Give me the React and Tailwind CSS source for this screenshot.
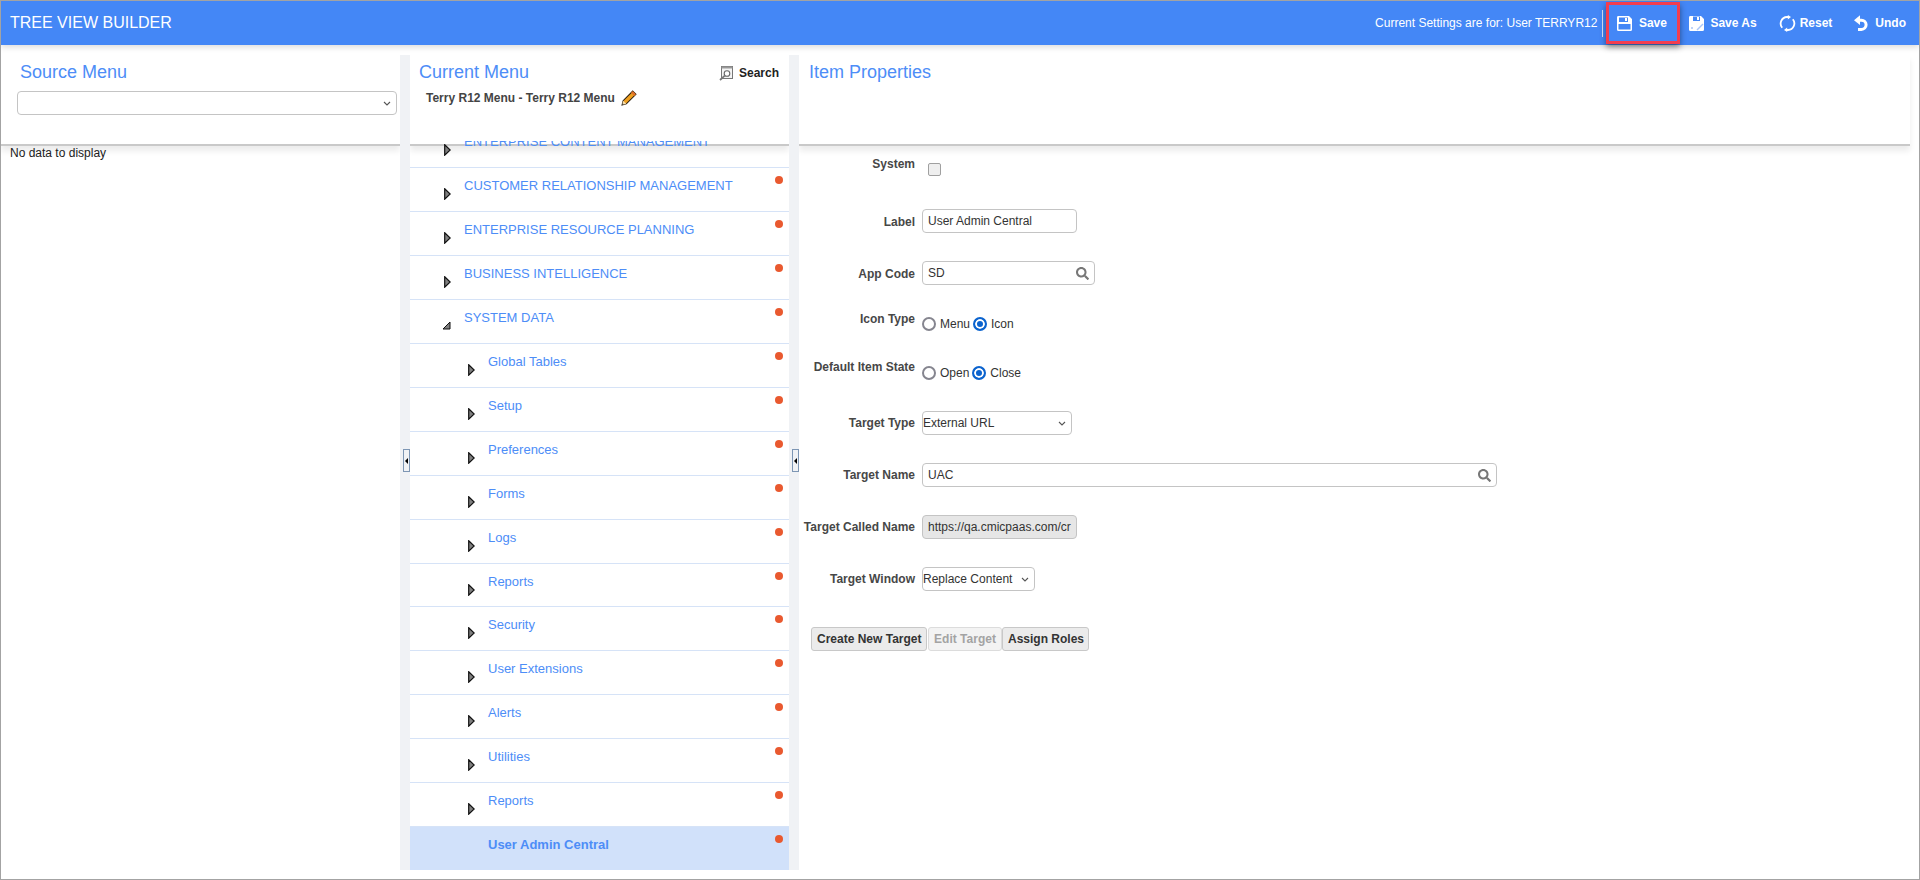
import React from "react";
import { FaSearch } from "react-icons/fa";

const SaveIcon = () => (
  <svg width="17" height="17" viewBox="0 0 17 17" fill="none">
    <path d="M2 1h11l3 3v10.5a1.5 1.5 0 0 1-1.5 1.5h-12A1.5 1.5 0 0 1 1 14.5v-12A1.5 1.5 0 0 1 2 1z" fill="#fff" />
    <rect x="3" y="2.5" width="9" height="4.5" fill="#4487f6" />
    <rect x="9" y="3" width="2" height="3" fill="#fff" />
    <rect x="2.5" y="9" width="12" height="5.5" fill="#4487f6" />
  </svg>
);
const SaveAsIcon = () => (
  <svg width="17" height="17" viewBox="0 0 17 17" fill="none">
    <path d="M2 1h11l3 3v10.5a1.5 1.5 0 0 1-1.5 1.5h-12A1.5 1.5 0 0 1 1 14.5v-12A1.5 1.5 0 0 1 2 1z" fill="#fff" />
    <rect x="5" y="1.5" width="7" height="4.5" fill="#4487f6" />
    <rect x="9" y="2" width="2" height="3" fill="#fff" />
    <path d="M9 15l6-6" stroke="#a9c6f8" strokeWidth="1.4" />
    <circle cx="4" cy="13" r="1" fill="#a9c6f8" />
  </svg>
);
const ResetIcon = () => (
  <svg width="17" height="17" viewBox="0 0 17 17" fill="none">
    <path d="M3.2 12.8A6.6 6.6 0 0 1 8 2h1.5" stroke="#fff" strokeWidth="1.8" />
    <path d="M8.8 0l3.2 2-3.2 2.4z" fill="#fff" />
    <path d="M13.8 4.2A6.6 6.6 0 0 1 9 15H7.5" stroke="#fff" strokeWidth="1.8" />
    <path d="M8.2 17L5 15l3.2-2.4z" fill="#fff" />
  </svg>
);
const UndoIcon = () => (
  <svg width="15" height="16" viewBox="0 0 15 16" fill="none">
    <path d="M3.5 5.2H7.5a4.6 4.6 0 0 1 0 9.2H4" stroke="#fff" strokeWidth="3" />
    <path d="M6 0.3v9.6L0 5.2z" fill="#fff" />
  </svg>
);
const FindIcon = () => (
  <svg width="14" height="15" viewBox="0 0 14 15" fill="none">
    <rect x="2.5" y="0.5" width="11" height="12" fill="#f4f4f4" stroke="#777" />
    <rect x="2.5" y="0.5" width="11" height="2" fill="#999" />
    <circle cx="8" cy="7.5" r="2.8" fill="#fff" stroke="#666" strokeWidth="1.1" />
    <path d="M5.8 9.6L1 14" stroke="#777" strokeWidth="1.7" />
  </svg>
);
const PencilIcon = () => (
  <svg width="16" height="16" viewBox="0 0 15 15" fill="none">
    <path d="M11 1l3 3-9 9-4 1 1-4z" fill="#f0a020" stroke="#2a1c08" strokeWidth="1" />
    <path d="M11 1l3 3-1.6 1.6-3-3z" fill="#e0702a" />
    <path d="M1 14l1-4 3 3z" fill="#f6dfb0" />
    <path d="M1 14l.4-1.6 1.2 1.2z" fill="#222" />
  </svg>
);
const Arrow = ({ open }) =>
  open ? (
    <svg width="9" height="9" viewBox="0 0 9 9">
      <path d="M1 8L8 1v7z" fill="#808080" stroke="#111" strokeWidth="1" />
    </svg>
  ) : (
    <svg width="7" height="12" viewBox="0 0 7 12">
      <path d="M0.7 0.8L6.2 6 0.7 11.2z" fill="#808080" stroke="#111" strokeWidth="1.2" />
    </svg>
  );

const Chevron = () => (
  <svg width="8" height="5" viewBox="0 0 8 5" fill="none" className="absolute right-[6px] top-[10px] pointer-events-none">
    <path d="M1 1l3 3 3-3" stroke="#555" strokeWidth="1.1" />
  </svg>
);

const Select = ({ className, value }) => (
  <div className={`relative h-[24px] ${className}`}>
    <select className="appearance-none block w-full h-full rounded border border-[#c4c4c4] bg-white pl-0 text-[12px] text-[#333]">
      {value && <option>{value}</option>}
    </select>
    <Chevron />
  </div>
);

const Row = ({ label, level, open, noArrow, selected, clear, h = "h-[44px]" }) => (
  <div className={`relative shrink-0 ${h} border-b border-[#d6e3f7] ${selected ? "bg-[#d1e1fa]" : clear ? "bg-transparent" : "bg-white"}`}>
    <span className={`absolute top-[10px] text-[13px] leading-[16px] whitespace-nowrap text-[#4d8df7] ${level === 1 ? "left-[54px]" : "left-[78px]"} ${selected ? "font-bold" : ""}`}>
      {label}
    </span>
    {!noArrow && (
      <span className={`absolute ${open ? "top-[21px] left-[32px]" : level === 1 ? "top-[20px] left-[34px]" : "top-[20px] left-[58px]"} flex`}>
        <Arrow open={open} />
      </span>
    )}
    <span className="absolute top-[8px] left-[365px] w-[8px] h-[8px] rounded-full bg-[#e9592f]" />
  </div>
);

const Handle = () => (
  <div className="absolute top-[394px] w-[7px] h-[23px] border border-[#7d96b4] bg-[#f0f2f5] flex items-center justify-center right-0">
    <span className="w-0 h-0 border-y-[3px] border-y-transparent border-r-[3px] border-r-black" />
  </div>
);

const PanelHead = ({ children, className = "" }) => (
  <div className={`relative z-10 shrink-0 h-[91px] bg-white border-b-2 border-[#c9c9c9] shadow-[0_5px_6px_rgba(0,0,0,0.08)] ${className}`}>
    {children}
  </div>
);

const FormRow = ({ label, h, lt = "mt-[5px]", children }) => (
  <div className={`flex items-start shrink-0 ${h}`}>
    <div className={`w-[116px] text-right font-bold text-[12px] leading-[16px] text-[#474747] whitespace-nowrap flex justify-end ${lt}`}>{label}</div>
    <div className="ml-[7px]">{children}</div>
  </div>
);

const inputCls = "h-[24px] rounded border border-[#c4c4c4] bg-white px-[5px] text-[12px] text-[#333] outline-none";

const Radio = ({ text, checked }) => (
  <label className="flex items-center text-[12px] leading-[14px] text-[#333]">
    <input
      type="radio"
      readOnly
      checked={!!checked}
      className="appearance-none w-[14px] h-[14px] m-0 rounded-full border-2 border-[#85858f] bg-white checked:border-[#0b63ce] checked:bg-[#0b63ce] checked:shadow-[inset_0_0_0_2px_#fff]"
    />
    <span className="ml-[4px] mr-[3px]">{text}</span>
  </label>
);

const btn = "h-[24px] rounded-[3px] border border-[#c8c8c8] bg-[#ebebeb] px-[5px] text-[12px] font-bold text-[#333] whitespace-nowrap";

const HBtn = ({ icon, text, className = "", gap = "ml-[6px]" }) => (
  <div className={`flex items-center font-bold text-[12px] text-white ${className}`}>
    {icon}
    <span className={gap}>{text}</span>
  </div>
);

const title = "text-[18px] leading-[26px] text-[#4d8df7]";

export default function App() {
  return (
    <div className="w-[1920px] h-[880px] border border-[#a3a3a3] bg-white flex flex-col overflow-hidden font-['Liberation_Sans',Arial,sans-serif]">
      <header className="relative z-30 shrink-0 h-[44px] bg-[#4487f6] flex items-center pl-[9px] shadow-[0_2px_6px_rgba(0,0,0,0.15)]">
        <h1 className="text-[16px] text-white font-normal">TREE VIEW BUILDER</h1>
        <div className="ml-auto flex items-center h-full">
          <span className="text-[12px] text-white whitespace-nowrap">Current Settings are for: User TERRYR12</span>
          <span className="w-px h-[27px] bg-[#d5e3fb] ml-[5px]" />
          <div className="ml-[3px] w-[74px] h-[42px] border-[3px] border-[#f23d4f] flex items-center justify-center pr-[4px] shadow-[0_3px_6px_rgba(0,0,0,0.45)]">
            <HBtn icon={<SaveIcon />} text="Save" />
          </div>
          <HBtn icon={<SaveAsIcon />} text="Save As" gap="ml-[5px]" className="ml-[8px]" />
          <HBtn icon={<ResetIcon />} text="Reset" gap="ml-[4px]" className="ml-[22px]" />
          <HBtn icon={<UndoIcon />} text="Undo" className="ml-[22px] mr-[13px]" />
        </div>
      </header>

      <main className="flex flex-1 min-h-0 pt-[10px] pb-[9px]">
        <section className="w-[399px] shrink-0 flex flex-col">
          <PanelHead>
            <h2 className={`absolute left-[19px] top-[4px] ${title}`}>Source Menu</h2>
            <Select className="absolute left-[16px] top-[36px] w-[380px]" />
          </PanelHead>
          <p className="pl-[9px] text-[12px] leading-[14px] text-[#222]">No data to display</p>
        </section>

        <div className="relative z-20 w-[10px] shrink-0 bg-[#f0f2f5]"><Handle /></div>

        <section className="w-[379px] shrink-0 flex flex-col">
          <PanelHead>
            <h2 className={`absolute left-[9px] top-[4px] ${title}`}>Current Menu</h2>
            <div className="absolute right-[10px] top-[9px] flex items-center font-bold text-[12px] text-[#222]">
              <FindIcon />
              <span className="ml-[6px]">Search</span>
            </div>
            <div className="absolute left-[16px] top-[34px] flex items-center font-bold text-[12px] text-[#444]">
              <span>Terry R12 Menu - Terry R12 Menu</span>
              <span className="ml-[6px] flex"><PencilIcon /></span>
            </div>
          </PanelHead>
          <div className="relative z-10 flex-1 min-h-0 -mt-[5px] overflow-hidden">
            <div className="flex flex-col -mt-[17px]">
              <Row label="ENTERPRISE CONTENT MANAGEMENT" level={1} clear />
              <Row label="CUSTOMER RELATIONSHIP MANAGEMENT" level={1} />
              <Row label="ENTERPRISE RESOURCE PLANNING" level={1} />
              <Row label="BUSINESS INTELLIGENCE" level={1} />
              <Row label="SYSTEM DATA" level={1} open />
              <Row label="Global Tables" level={2} />
              <Row label="Setup" level={2} />
              <Row label="Preferences" level={2} />
              <Row label="Forms" level={2} />
              <Row label="Logs" level={2} />
              <Row label="Reports" level={2} h="h-[43px]" />
              <Row label="Security" level={2} />
              <Row label="User Extensions" level={2} />
              <Row label="Alerts" level={2} />
              <Row label="Utilities" level={2} />
              <Row label="Reports" level={2} />
              <Row label="User Admin Central" level={2} noArrow selected />
            </div>
          </div>
        </section>

        <div className="relative z-20 w-[10px] shrink-0 bg-[#f0f2f5]"><Handle /></div>

        <section className="w-[1111px] shrink-0 flex flex-col">
          <PanelHead>
            <h2 className={`absolute left-[10px] top-[4px] ${title}`}>Item Properties</h2>
          </PanelHead>
          <div className="flex flex-col pt-[5px]">
            <FormRow label="System" h="h-[58px]">
              <input type="checkbox" disabled className="appearance-none block w-[13px] h-[13px] ml-[6px] mt-[12px] rounded-[2px] border border-[#a0a0a0] bg-[#efefef]" />
            </FormRow>
            <FormRow label="Label" h="h-[52px]">
              <input readOnly value="User Admin Central" className={`${inputCls} w-[155px] block`} />
            </FormRow>
            <FormRow label="App Code" h="h-[50px]">
              <div className={`${inputCls} w-[173px] flex items-center justify-between pr-[5px]`}>
                <span>SD</span>
                <FaSearch className="w-[13px] h-[13px] text-[#777]" />
              </div>
            </FormRow>
            <FormRow label="Icon Type" h="h-[48px]" lt="mt-0">
              <div className="flex items-center mt-[6px]">
                <Radio text="Menu" />
                <Radio text="Icon" checked />
              </div>
            </FormRow>
            <FormRow label="Default Item State" h="h-[52px]" lt="mt-0">
              <div className="flex items-center mt-[7px]">
                <Radio text="Open" />
                <Radio text="Close" checked />
              </div>
            </FormRow>
            <FormRow label="Target Type" h="h-[52px]" lt="mt-[4px]">
              <Select className="w-[150px]" value="External URL" />
            </FormRow>
            <FormRow label="Target Name" h="h-[52px]" lt="mt-[4px]">
              <div className={`${inputCls} w-[575px] flex items-center justify-between pr-[5px]`}>
                <span>UAC</span>
                <FaSearch className="w-[13px] h-[13px] text-[#777]" />
              </div>
            </FormRow>
            <FormRow label="Target Called Name" h="h-[52px]" lt="mt-[4px]">
              <div className={`${inputCls} w-[155px] !bg-[#e6e6e6] flex items-center overflow-hidden whitespace-nowrap`}>
                https://qa.cmicpaas.com/cr
              </div>
            </FormRow>
            <FormRow label="Target Window" h="h-[60px]" lt="mt-[4px]">
              <Select className="w-[113px]" value="Replace Content" />
            </FormRow>
            <div className="flex pl-[12px]">
              <button className={`${btn} w-[116px]`}>Create New Target</button>
              <button disabled className={`${btn} w-[74px] ml-px !text-[#a3a3a3] !bg-[#f3f3f3] !border-[#dcdcdc]`}>Edit Target</button>
              <button className={`${btn} w-[87px]`}>Assign Roles</button>
            </div>
          </div>
        </section>
      </main>
    </div>
  );
}
